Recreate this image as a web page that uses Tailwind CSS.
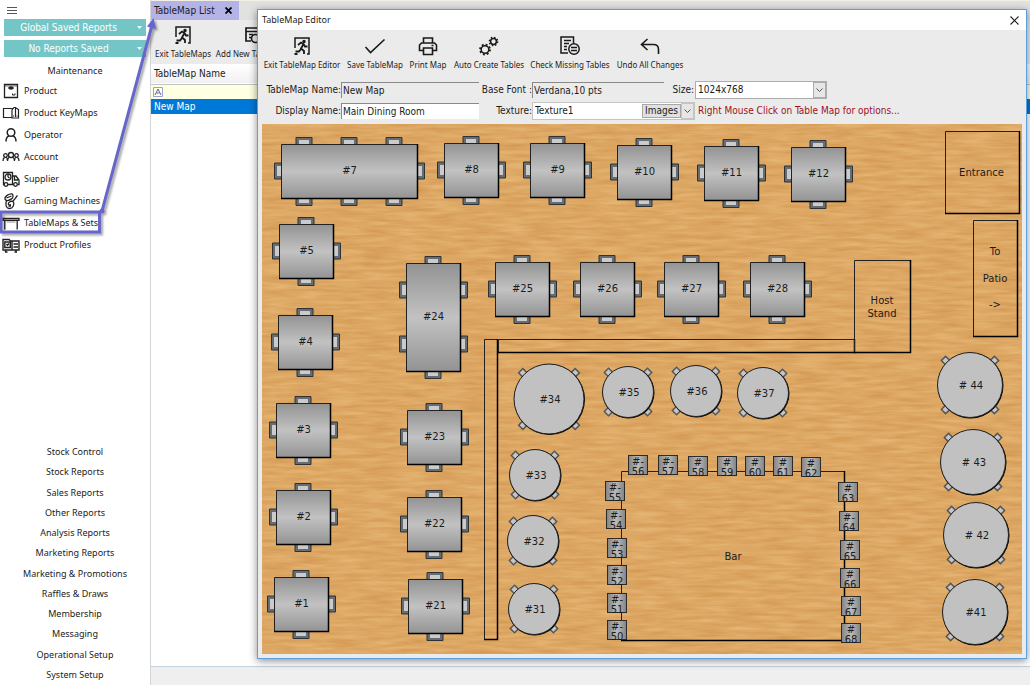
<!DOCTYPE html>
<html lang="en">
<head>
<meta charset="utf-8">
<title>TableMap Editor</title>
<script src="https://cdn.jsdelivr.net/npm/@tailwindcss/browser@4"></script>
</head>
<body class="relative flex h-screen overflow-hidden bg-white font-['DejaVu_Sans_Condensed','DejaVu_Sans',sans-serif] text-[10px] leading-4 text-[#1c1c1c]">

<!-- Sidebar -->
<nav class="flex w-[150px] shrink-0 flex-col font-['Noto_Sans',sans-serif] text-[9px]">
  <button aria-label="Menu" class="ml-[7px] flex h-[19px] w-[10px] items-center">
    <svg class="h-[8px] w-[10px]" viewBox="0 0 10 8" stroke="#555" stroke-width="1"><path d="M0 1.5h10M0 4.5h10M0 7.5h10"/></svg>
  </button>
  <div class="flex flex-col gap-1 pr-1 pl-1 font-['DejaVu_Sans_Condensed','DejaVu_Sans',sans-serif] text-[10px] text-white">
    <button class="flex h-[17px] items-center bg-[#74c6c6] pr-1"><span class="flex-1 pr-1">Global Saved Reports</span><svg class="h-[3px] w-[5px]" viewBox="0 0 5 3"><path d="M0 0h5L2.500 3z" fill="#fff"/></svg></button>
    <button class="flex h-[17px] items-center bg-[#74c6c6] pr-1"><span class="flex-1 pr-1">No Reports Saved</span><svg class="h-[3px] w-[5px]" viewBox="0 0 5 3"><path d="M0 0h5L2.500 3z" fill="#fff"/></svg></button>
  </div>
  <button class="mt-[6px] h-4">Maintenance</button>
  <ul class="mt-px flex h-[174px] flex-col justify-between">
    <li><a href="#" class="flex h-[22px] items-center gap-1 pl-[2px]"><svg class="h-[18px] w-[18px]" viewBox="0 0 18 18" fill="none" stroke="#222" stroke-width="1.300"><path d="M2.500 2.500h13v13h-13z"/><path d="M2.500 4h13" stroke-width=".6"/><ellipse cx="9" cy="6" rx="2.500" ry="1.200" fill="#222" stroke-width=".8"/><path d="M10.500 11.500v1.500h2.500v-1.500" stroke-width="1"/></svg>Product</a></li>
    <li><a href="#" class="flex h-[22px] items-center gap-1 pl-[2px]"><svg class="h-[18px] w-[18px]" viewBox="0 0 18 18" fill="none" stroke="#222" stroke-width="1.200"><path d="M11 4.500H1.500v9H10M10 12.500V6l2-2.500h1.500V13M10 6v8h6.500V5.500L14 4M11 12h1M14.500 12h1"/></svg>Product KeyMaps</a></li>
    <li><a href="#" class="flex h-[22px] items-center gap-1 pl-[2px]"><svg class="h-[18px] w-[18px]" viewBox="0 0 18 18" fill="none" stroke="#222" stroke-width="1.500"><circle cx="9" cy="6.500" r="3.800"/><path d="M4 15.500c0-3.500 1.500-5 3-5.500M14 15.500c0-3.500-1.500-5-3-5.500"/></svg>Operator</a></li>
    <li><a href="#" class="flex h-[22px] items-center gap-1 pl-[2px]"><svg class="h-[18px] w-[18px]" viewBox="0 0 18 18" fill="none" stroke="#222" stroke-width="1.300"><circle cx="9" cy="7" r="2.500"/><path d="M5.500 13c0-2.500 1-3.500 2.200-4M12.500 13c0-2.500-1-3.500-2.200-4"/><circle cx="3.500" cy="7.500" r="1.800"/><path d="M1 13c0-2 .8-3.300 1.700-3.700M5.300 12c0-1.500-.2-2.200-1-2.700"/><circle cx="14.500" cy="7.500" r="1.800"/><path d="M17 13c0-2-.8-3.300-1.700-3.700M12.700 12c0-1.500.2-2.200 1-2.700"/></svg>Account</a></li>
    <li><a href="#" class="flex h-[22px] items-center gap-1 pl-[2px]"><svg class="h-[18px] w-[18px]" viewBox="0 0 18 18" fill="none" stroke="#222" stroke-width="1.300"><path d="M2 14.500H1.500v-12h9v12H6M10.500 6H14l3 4v4.500h-1.500M11 14.500h1M12.500 6v4H16"/><circle cx="6" cy="7" r="3"/><path d="M6 7V5M6 7l1.500 1"/><circle cx="4" cy="14.500" r="1.800"/><circle cx="13.500" cy="14.500" r="1.800"/></svg>Supplier</a></li>
    <li><a href="#" class="flex h-[22px] items-center gap-1 pl-[2px]"><svg class="h-[18px] w-[18px]" viewBox="0 0 18 18" fill="none" stroke="#222" stroke-width="1.300"><path d="M10.500 2C6.500 1.500 2.500 4.500 3 7c.6 2.500 4.500 2 7.500-1 .8-1.200.8-2.500 0-4M15.500 3.500c-1.500 1.500-2.500 4-5 6M4.500 9C3 12 4 16.500 7.500 16.500c3.500 0 5-4 4-6.500-1-1.500-4-.5-5 1-.8 1.500.8 2.500 2.500 1.500M4.500 6l5-2M6 8.500l3-1.500M6.500 14h2.500"/></svg>Gaming Machines</a></li>
    <li><a href="#" class="flex h-[22px] items-center gap-1 pl-[2px]"><svg class="h-[18px] w-[18px]" viewBox="0 0 18 18" fill="none" stroke="#222" stroke-width="1.300"><path d="M1 4.500h16v1.800H1zM2.800 6.500v9M15.200 6.500v9"/><path d="M4.500 8h9" stroke-width=".8" stroke="#777"/></svg>TableMaps &amp; Sets</a></li>
    <li><a href="#" class="flex h-[22px] items-center gap-1 pl-[2px]"><svg class="h-[18px] w-[18px]" viewBox="0 0 18 18" fill="none" stroke="#222" stroke-width="1.400"><path d="M1 14V3.500h6L8.500 5H17v9zM3 16h2.500M12.500 16H15M10 5v9"/><path d="M2.800 6h5.500v5.500H2.800zM4.500 8l1 1.200L7 7.500M11.500 8H16M11.500 11H16M3.500 14v2M14 14v2"/></svg>Product Profiles</a></li>
  </ul>
  <ul class="mt-auto flex h-[243px] flex-col justify-between text-center leading-5">
    <li><a href="#">Stock Control</a></li>
    <li><a href="#">Stock Reports</a></li>
    <li><a href="#">Sales Reports</a></li>
    <li><a href="#">Other Reports</a></li>
    <li><a href="#">Analysis Reports</a></li>
    <li><a href="#">Marketing Reports</a></li>
    <li><a href="#">Marketing &amp; Promotions</a></li>
    <li><a href="#">Raffles &amp; Draws</a></li>
    <li><a href="#">Membership</a></li>
    <li><a href="#">Messaging</a></li>
    <li><a href="#">Operational Setup</a></li>
    <li><a href="#">System Setup</a></li>
  </ul>
</nav>

<!-- TableMap list -->
<main class="flex min-w-0 flex-1 flex-col border-l border-[#d5d5d5]">
  <div class="flex h-5 border-t border-[#f3efe2] bg-[#e1e1df]">
    <button class="flex w-[88px] items-center bg-[#b3b3e6] pl-[3px]">TableMap List
      <svg class="ml-[10px] h-[7px] w-[7px]" viewBox="0 0 7 7" stroke="#000" stroke-width="1.800"><path d="M.5.5l6 6M6.500.5l-6 6"/></svg>
    </button>
  </div>
  <div class="flex h-11 bg-[#ebebeb] pt-[5px] font-['Noto_Sans',sans-serif] text-[8px]">
    <button class="flex w-[64px] flex-col items-center gap-px whitespace-nowrap">
      <svg class="h-[20px] w-[20px]" viewBox="0 0 20 20" fill="none" stroke="#1a1a1a" stroke-width="1.500"><path d="M3 12V2h14v16h-2"/><circle cx="12" cy="5.500" r="1" fill="#1a1a1a"/><path d="M6 9l3-2.500 2.500 1.500-2.500 4.500 3 2.500v3M11.500 8l1.500 2.500h2.500M9 13l-2 2.500H3.500M2.500 18h3" stroke-width="1.800"/></svg>
      Exit TableMaps
    </button>
    <button class="flex w-[74px] flex-col items-center gap-px whitespace-nowrap">
      <svg class="h-[20px] w-[20px]" viewBox="0 0 20 20" fill="none" stroke="#1a1a1a" stroke-width="1.700"><path d="M9 16H4V3h13v6M4 6.500h13M7 9.500h4M7 12.500h2"/><circle cx="13.500" cy="13.500" r="4"/></svg>
      Add New TableMap
    </button>
  </div>
  <div class="min-h-0 flex-1">
    <table class="w-full border-collapse text-left">
      <thead>
        <tr class="h-5 border-b border-[#c4c4c4] bg-gradient-to-b from-white to-[#f1f1f1]"><th class="p-0 pl-[3px] font-normal">TableMap Name</th></tr>
      </thead>
      <tbody>
        <tr class="h-[15px] bg-[#ffffe1]"><td class="p-0 pl-[2px]"><svg class="h-[10px] w-[10px]" viewBox="0 0 10 10" fill="none" stroke="#5a62b8"><path d="M.5.5h9v9h-9z" stroke="#9a9fd4"/><path d="M2 8L5 2l3 6M3.500 6h3"/></svg></td></tr>
        <tr class="h-[15px] bg-[#0078d7] text-white"><td class="p-0 pl-[3px] leading-[14px]">New Map</td></tr>
      </tbody>
    </table>
  </div>
  <footer class="h-[19px] border-t border-[#c3d0de] bg-[#efefef]"></footer>
</main>

<!-- Editor window -->
<section role="dialog" aria-labelledby="editor-title" class="absolute top-[9px] right-[3px] left-[257px] flex flex-col border border-[#5a9fe0] bg-[#ebebeb] shadow-[0_2px_8px_rgba(0,0,0,0.45)]">
  <header class="flex h-5 items-center justify-between bg-white pr-[7px] pl-1">
    <h1 id="editor-title" class="font-['Noto_Sans',sans-serif] text-[9px]">TableMap Editor</h1>
    <button aria-label="Close"><svg class="h-[9px] w-[9px]" viewBox="0 0 9 9" stroke="#222" stroke-width="1.100"><path d="M.5.5l8 8M8.500.5l-8 8"/></svg></button>
  </header>
  <div class="flex h-[51px] pt-[6px] pl-[2px] font-['Noto_Sans',sans-serif] text-[8px]">
    <button class="flex w-[84px] flex-col items-center gap-px whitespace-nowrap">
      <svg class="h-[20px] w-[20px]" viewBox="0 0 20 20" fill="none" stroke="#1a1a1a" stroke-width="1.500"><path d="M3 12V2h14v16h-2"/><circle cx="12" cy="5.500" r="1" fill="#1a1a1a"/><path d="M6 9l3-2.500 2.500 1.500-2.500 4.500 3 2.500v3M11.500 8l1.500 2.500h2.500M9 13l-2 2.500H3.500M2.500 18h3" stroke-width="1.800"/></svg>
      Exit TableMap Editor
    </button>
    <button class="flex w-[62px] flex-col items-center gap-px whitespace-nowrap">
      <svg class="h-[20px] w-[22px]" viewBox="0 0 22 20" fill="none" stroke="#1a1a1a" stroke-width="1.600"><path d="M1.500 11l5 5.500L20.500 3.500"/></svg>
      Save TableMap
    </button>
    <button class="flex w-[44px] flex-col items-center gap-px whitespace-nowrap">
      <svg class="h-[20px] w-[20px]" viewBox="0 0 20 20" fill="none" stroke="#1a1a1a" stroke-width="1.600"><path d="M5.500 7V2h9v5M5 14.500H1.500V9l2-2h13l2 2v5.500H15"/><path d="M5.500 12h9v6.500h-9zM13.500 9.500h2"/></svg>
      Print Map
    </button>
    <button class="flex w-[78px] flex-col items-center gap-px whitespace-nowrap">
      <svg class="h-[20px] w-[20px]" viewBox="0 0 20 20" fill="none" stroke="#1a1a1a"><circle cx="6" cy="13.500" r="3.800" stroke-width="1.500"/><circle cx="6" cy="13.500" r="5" stroke-width="1.800" stroke-dasharray="1.900 2.030"/><circle cx="14.500" cy="5.500" r="2.900" stroke-width="1.500"/><circle cx="14.500" cy="5.500" r="4" stroke-width="1.700" stroke-dasharray="1.500 1.640"/></svg>
      Auto Create Tables
    </button>
    <button class="flex w-[84px] flex-col items-center gap-px whitespace-nowrap">
      <svg class="h-[20px] w-[20px]" viewBox="0 0 20 20" fill="none" stroke="#1a1a1a" stroke-width="1.500"><path d="M8 17H1V1h12.500v6M4 4.500h7M4 7.500h5M4 10.500h3M4 13.500h3"/><circle cx="14" cy="13" r="5.200"/><path d="M11 11.500h6M11 14.500h6"/></svg>
      Check Missing Tables
    </button>
    <button class="flex w-[76px] flex-col items-center gap-px whitespace-nowrap">
      <svg class="h-[20px] w-[20px]" viewBox="0 0 20 20" fill="none" stroke="#1a1a1a" stroke-width="1.600"><path d="M7.500 3l-6 5.500 6 5.500M2 8.500h11.500c3 0 5 2 5 5V18"/></svg>
      Undo All Changes
    </button>
  </div>

  <form class="flex flex-col gap-[3px] pb-1 pl-1">
    <div class="flex h-[18px] items-center">
      <label for="map-name" class="w-[79px] text-right whitespace-nowrap">TableMap Name:</label>
      <input id="map-name" value="New Map" readonly class="h-4 w-[138px] border-t border-l border-[#8a8a8a] bg-[#ebebeb] px-px outline-none">
      <label for="base-font" class="w-[53px] text-right whitespace-nowrap">Base Font :</label>
      <input id="base-font" value="Verdana,10 pts" readonly class="h-4 w-[132px] border-t border-l border-[#8a8a8a] bg-[#ebebeb] px-px outline-none">
      <label for="size" class="w-[31px] pr-px text-right">Size:</label>
      <div class="relative w-[132px]">
        <select id="size" class="block h-[18px] w-full appearance-none border border-[#adadad] bg-white px-[2px] leading-4 outline-none"><option>1024x768</option><option>800x600</option></select>
        <span class="pointer-events-none absolute top-px right-px flex h-4 w-[13px] items-center justify-center border border-[#adadad] bg-[#e6e6e6]"><svg class="h-[4px] w-[7px]" viewBox="0 0 7 4" fill="none" stroke="#555"><path d="M.5.5l3 3 3-3"/></svg></span>
      </div>
    </div>
    <div class="flex h-[18px] items-center">
      <label for="display-name" class="w-[79px] text-right whitespace-nowrap">Display Name:</label>
      <input id="display-name" value="Main Dining Room" class="h-4 w-[138px] border-t border-l border-[#8a8a8a] bg-white px-px outline-none">
      <label for="texture" class="w-[53px] text-right">Texture:</label>
      <div class="relative w-[163px]">
        <select id="texture" class="block h-[18px] w-full appearance-none border border-[#c4c4c4] bg-white px-[2px] leading-4 outline-none"><option>Texture1</option><option>Texture2</option></select>
        <button type="button" class="absolute top-[2px] right-[14px] h-[14px] w-[39px] border border-[#a8a8a8] bg-[#e1e1e1] leading-3">Images</button>
        <span class="pointer-events-none absolute top-px right-px flex h-4 w-[13px] items-center justify-center border border-[#c4c4c4] bg-[#e6e6e6]"><svg class="h-[4px] w-[7px]" viewBox="0 0 7 4" fill="none" stroke="#555"><path d="M.5.5l3 3 3-3"/></svg></span>
      </div>
      <p class="pl-[3px] whitespace-nowrap text-[#a01020]">Right Mouse Click on Table Map for options...</p>
    </div>
  </form>

  <div class="pr-1 pb-1 pl-1">
    <svg id="floor" class="block w-full" viewBox="0 0 760 530" font-family="'DejaVu Sans', sans-serif" font-size="10" fill="#1c1c1c" text-anchor="middle">
      <defs>
        <linearGradient id="steel" x1="0" y1="0" x2="0" y2="1"><stop offset="0" stop-color="#929292"/><stop offset=".5" stop-color="#c2c2c2"/><stop offset="1" stop-color="#929292"/></linearGradient>
        <linearGradient id="stool" x1="0" y1="0" x2="1" y2="0"><stop offset="0" stop-color="#828282"/><stop offset=".5" stop-color="#bcbcbc"/><stop offset="1" stop-color="#828282"/></linearGradient>
        <filter id="grain" x="0" y="0" width="1" height="1" color-interpolation-filters="sRGB">
          <feTurbulence type="fractalNoise" baseFrequency=".03 .26" numOctaves="3" seed="8"/>
          <feColorMatrix values=".1 0 0 0 .815  .15 0 0 0 .58  .17 0 0 0 .305  0 0 0 0 1"/>
        </filter>
        <g id="seat"><path d="M-8-7.500H8V0H-8z" fill="#666c70" stroke="#2e3234"/><path d="M-5-5H5V0H-5z" fill="#cbcbcb"/></g>
        <g id="peg"><path d="M-3-3.500h6v6h-6z" fill="#c6c6c6" stroke="#54585a" stroke-width="1.500"/></g>
      </defs>
      <rect width="760" height="530" fill="#dca763"/>
      <rect width="760" height="530" filter="url(#grain)"/>
    </svg>
  </div>
</section>

<!-- Callout: highlighted menu entry and the tab it opens -->
<svg class="pointer-events-none absolute top-0 left-0 h-[250px] w-[170px] drop-shadow-[2px_2px_1px_rgba(0,0,0,0.35)]" viewBox="0 0 170 250" fill="none" stroke="#6666cc">
  <path d="M1 212h98.500v20H1z" stroke-width="3"/>
  <path d="M102 211L151.500 27" stroke-width="3"/>
  <circle cx="102" cy="211" r="2.500" fill="#6666cc" stroke="none"/>
  <path d="M153.500 18l2.500 11-9-2.500z" fill="#6666cc" stroke="none"/>
</svg>

<script>
const floor = document.getElementById('floor');
const parts = [];
const label = (x, y, t) => parts.push(`<text x="${x}" y="${y + 4}">${t}</text>`);
const edge = (x, y, w, h) => `<path d="M${x + .5} ${y + h}V${y + .5}H${x + w}" fill="none" stroke="#222"/><path d="M${x} ${y + h - .5}H${x + w - .5}V${y}" fill="none" stroke="#000" stroke-width="1.500"/>`;

// Walls and fixtures: x, y, width, height
[[222,215,14,301],[236,215,357,14],[592,136,57,93],[683,7,75,83],[711,96,45,117],[359,347,224,170]]
  .forEach(r => parts.push(edge(...r)));
label(719.5, 48, 'Entrance');
label(733, 127, 'To'); label(733, 154, 'Patio'); label(733, 180, '-&gt;');
label(620, 175.5, 'Host'); label(620, 188.5, 'Stand');
label(471, 432, 'Bar');

// Square and long tables: number, x, y, width, height
[[7,19,20,137,55],[8,182,19,55,55],[9,268,19,55,55],[10,355,21,55,55],[11,442,22,55,55],[12,529,23,55,55],
 [5,17,100,55,55],[4,16,191,55,55],[3,14,279,55,55],[2,14,366,55,55],[1,12,453,55,55],
 [24,144,139,55,109],[23,145,286,55,55],[22,145,373,55,55],[21,146,455,55,55],
 [25,233,138,55,55],[26,318,138,55,55],[27,402,138,55,55],[28,488,138,55,55]]
.forEach(([n, x, y, w, h]) => {
  const xs = w > 100 ? [23, 68, 113] : [27];
  const ys = h > 100 ? [27, 81] : [27];
  const seat = (sx, sy, a) => parts.push(`<use href="#seat" transform="translate(${sx} ${sy}) rotate(${a})"/>`);
  xs.forEach(d => { seat(x + d, y + 1, 0); seat(x + d, y + h - 1, 180); });
  ys.forEach(d => { seat(x + 1, y + d, 270); seat(x + w - 1, y + d, 90); });
  parts.push(`<rect x="${x}" y="${y}" width="${w}" height="${h}" fill="url(#steel)"/>` + edge(x, y, w, h));
  label(x + w / 2, y + Math.floor(h / 2) - 1, '#' + n);
});

// Round tables: text, centre x, centre y, radius
[['#34',287,275,35.5],['#35',366,268,26],['#36',434,267,26],['#37',501,269,26],['#33',273,351,26],['#32',271,417,26],['#31',272,485,26],
 ['# 44',708,261,33],['# 43',711,338,33],['# 42',714,411,33],['#41',713,488,33]]
.forEach(([t, x, y, r]) => {
  [45, 135, 225, 315].forEach(a => parts.push(`<use href="#peg" transform="translate(${x} ${y}) rotate(${a}) translate(0 ${-r - 1})"/>`));
  parts.push(`<circle cx="${x + .5}" cy="${y + .5}" r="${r}" fill="#000"/><circle cx="${x}" cy="${y}" r="${r - .5}" fill="#c1c1c1" stroke="#222"/>`);
  label(x + 1, y, t);
});

// Bar stools: first line, number, x, y
[['#-',56,366,331],['#-',57,396,331],['#',58,426,332],['#',59,455,332],['#',60,483,332],['#',61,511,332],['#',62,539,333],
 ['#-',55,343,357],['#-',54,344,385],['#-',53,345,414],['#-',52,345,441],['#-',51,345,469],['#-',50,345,496],
 ['#',63,576,358],['#-',64,577,387],['#',65,578,416],['#',66,578,444],['#',67,579,472],['#',68,579,499]]
.forEach(([s, n, x, y]) => {
  parts.push(`<rect x="${x + .5}" y="${y + .5}" width="19" height="19" fill="url(#stool)" stroke="#2b2b2b"/>`);
  label(x + 10, y + 6, s); label(x + 10, y + 16, n);
});
floor.insertAdjacentHTML('beforeend', parts.join(''));
</script>
</body>
</html>
